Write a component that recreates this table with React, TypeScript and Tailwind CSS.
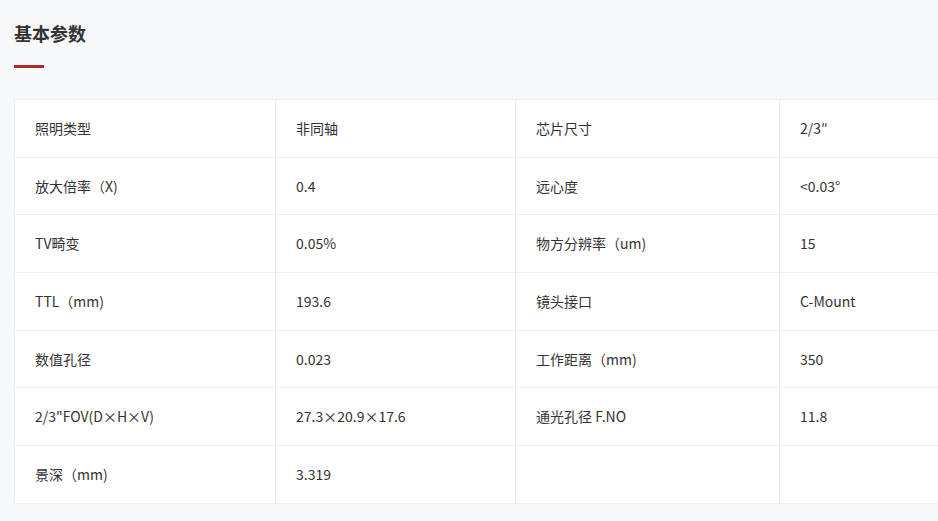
const rows: [string, string, string, string][] = [
  ['照明类型', '非同轴', '芯片尺寸', '2/3″'],
  ['放大倍率（X)', '0.4', '远心度', '<0.03°'],
  ['TV畸变', '0.05%', '物方分辨率（um)', '15'],
  ['TTL（mm)', '193.6', '镜头接口', 'C-Mount'],
  ['数值孔径', '0.023', '工作距离（mm)', '350'],
  ['2/3"FOV(D×H×V)', '27.3×20.9×17.6', '通光孔径 F.NO', '11.8'],
  ['景深（mm)', '3.319', '', ''],
]

const widths = ['w-[261px]', 'w-[240px]', 'w-[264px]', 'w-[264px]']

export default function App() {
  return (
    <div
      className="min-h-[521px] w-[938px] overflow-hidden bg-[#f7f8fa] pl-[14px] pt-[20px] text-[#333]"
      style={{ fontFamily: '"Noto Sans CJK SC", "Noto Sans", sans-serif' }}
    >
      {/* Section heading */}
      <h2 className="text-[18px] font-bold leading-[26px] text-[#333]">基本参数</h2>
      <div className="mt-[19px] h-[3px] w-[30px] bg-[#b22a2a]" />

      {/* Spec table */}
      <div className="mt-[31px] w-[1030px] border-l border-t border-[#eeeeee] bg-white">
        {rows.map((row, i) => (
          <div key={i} className="flex">
            {row.map((cell, j) => (
              <div
                key={j}
                className={`${widths[j]} flex h-[57.7px] shrink-0 items-center border-b border-r border-[#eeeeee] pl-5 text-[14px]`}
              >
                {cell}
              </div>
            ))}
          </div>
        ))}
      </div>
    </div>
  )
}
